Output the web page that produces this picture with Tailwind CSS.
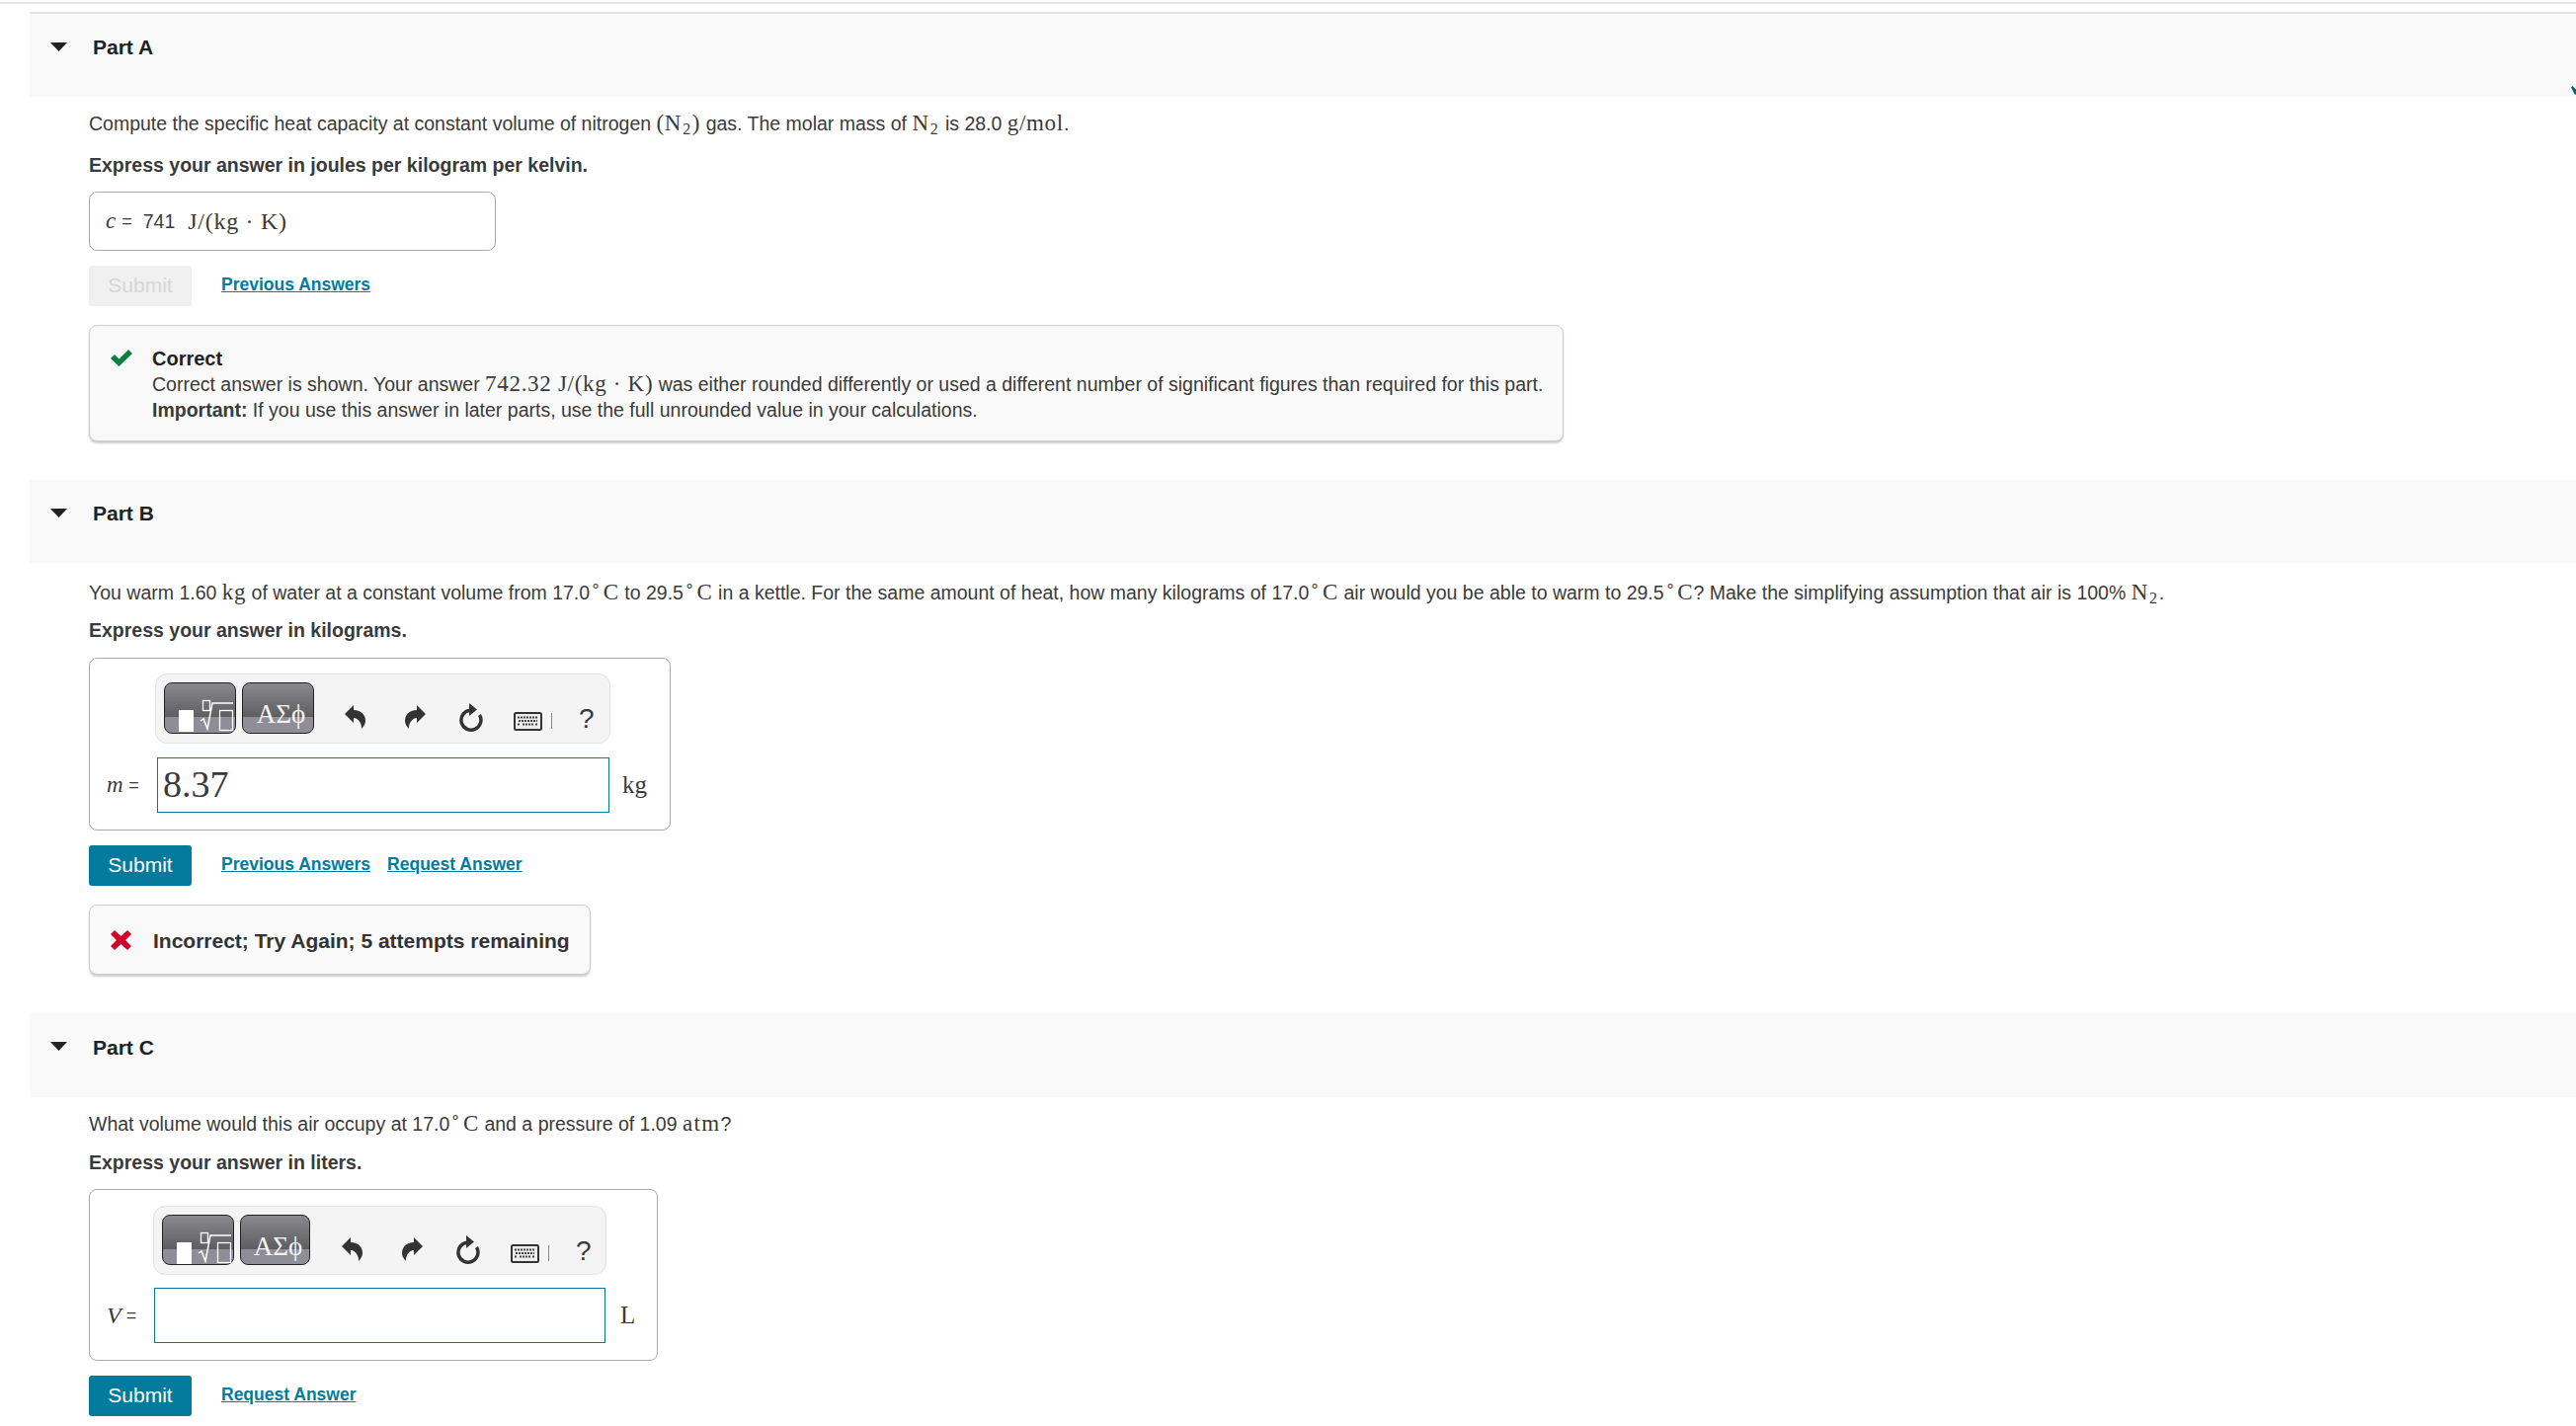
<!DOCTYPE html>
<html lang="en">
<head>
  <meta charset="UTF-8">
  <title>Part A, B, C</title>
  <script src="https://cdn.jsdelivr.net/npm/@tailwindcss/browser@4"></script>
</head>
<body class="bg-white text-[#3a3a3a] font-['Liberation_Sans',sans-serif] text-[19.5px] leading-[24px] overflow-hidden h-[1444px]">

  <div class="pt-[2px]"><div class="h-[2px] bg-[#e4e4e4]"></div></div>

  <!-- Part A -->
  <div class="ml-[30px] mt-[8px] h-[86px] bg-[#f9f9f9] border-t-2 border-[#e4e4e4] flex items-center gap-[26px] pl-[21px] pb-[16px] relative">
    <svg class="-mt-[2px]" width="17" height="9" viewBox="0 0 17 9"><path d="M0 0H17L8.5 9Z" fill="#222"/></svg>
    <span class="font-bold text-[#222] text-[21px]">Part A</span>
    <svg class="absolute right-0 top-[73px]" width="5" height="9" viewBox="0 0 5 9"><path d="M0 1.5L1.5 0L6 4.5V8L4 9Z" fill="#04607d"/></svg>
  </div>
  <div class="pl-[90px]">
    <p class="mt-[15px]">Compute the specific heat capacity at constant volume of nitrogen <span class="font-['Liberation_Serif'] text-[23px] tracking-[0.03em]">(N<sub class="text-[16px] leading-none ml-[1px] mr-[1px]">2</sub>)</span> gas. The molar mass of <span class="font-['Liberation_Serif'] text-[23px] tracking-[0.03em]">N<sub class="text-[16px] leading-none ml-[1px] mr-[1px]">2</sub></span> is 28.0 <span class="font-['Liberation_Serif'] text-[23px] tracking-[0.03em]">g/mol</span>.</p>
    <p class="mt-[18px] font-bold">Express your answer in joules per kilogram per kelvin.</p>
    <div class="mt-[15px] w-[412px] h-[60px] border border-[#aaa] rounded-lg flex items-center pl-[16px]">
      <i class="font-['Liberation_Serif'] text-[23px]">c</i><span class="ml-[6px] text-[18px]">=</span><span class="ml-[11px]">741</span>
      <span class="ml-[13px] font-['Liberation_Serif'] text-[24px] tracking-[0.03em]">J/(kg · K)</span>
    </div>
    <div class="mt-[15px] flex items-center">
      <button class="w-[104px] h-[41px] rounded-[3px] bg-[#f0f0f0] text-[#d6d6d6] text-[21px] pb-[2px]">Submit</button>
      <a href="#" class="ml-[30px] text-[17.5px] font-bold underline text-[#007c9e] pb-[3px]">Previous Answers</a>
    </div>
    <div class="mt-[19px] w-[1493px] h-[118px] bg-[#f9f9f9] border border-[#ccc] rounded-lg shadow-[0_2px_2px_rgba(0,0,0,0.2)] flex pl-[21px] pt-[20px]">
      <svg class="mt-[4px]" width="22" height="17" viewBox="0 0 22 17"><path d="M0 9L4 5L8.5 9.5L18 0L22 4L8.5 17Z" fill="#0a7f3f"/></svg>
      <div class="ml-[20px] leading-[26px]">
        <div class="font-bold text-[#222] text-[20px]">Correct</div>
        <div>Correct answer is shown. Your answer <span class="font-['Liberation_Serif'] text-[23px] tracking-[0.03em]">742.32 J/(kg · K)</span> was either rounded differently or used a different number of significant figures than required for this part.</div>
        <div><b>Important:</b> If you use this answer in later parts, use the full unrounded value in your calculations.</div>
      </div>
    </div>
  </div>

  <!-- Part B -->
  <div class="ml-[30px] mt-[39px] h-[84px] bg-[#f9f9f9] flex items-center gap-[26px] pl-[21px] pb-[16px]">
    <svg class="-mt-[2px]" width="17" height="9" viewBox="0 0 17 9"><path d="M0 0H17L8.5 9Z" fill="#222"/></svg>
    <span class="font-bold text-[#222] text-[21px]">Part B</span>
  </div>
  <div class="pl-[90px]">
    <p class="mt-[18px]">You warm 1.60 <span class="font-['Liberation_Serif'] text-[23px] tracking-[0.03em]">kg</span> of water at a constant volume from 17.0<span class="font-['Liberation_Serif'] text-[23px] tracking-[0.03em]"><sup class="text-[16px] leading-none ml-[1px] mr-[2px]">∘</sup>C</span> to 29.5<span class="font-['Liberation_Serif'] text-[23px] tracking-[0.03em]"><sup class="text-[16px] leading-none ml-[1px] mr-[2px]">∘</sup>C</span> in a kettle. For the same amount of heat, how many kilograms of 17.0<span class="font-['Liberation_Serif'] text-[23px] tracking-[0.03em]"><sup class="text-[16px] leading-none ml-[1px] mr-[2px]">∘</sup>C</span> air would you be able to warm to 29.5<span class="font-['Liberation_Serif'] text-[23px] tracking-[0.03em]"><sup class="text-[16px] leading-none ml-[1px] mr-[2px]">∘</sup>C</span>? Make the simplifying assumption that air is 100% <span class="font-['Liberation_Serif'] text-[23px] tracking-[0.03em]">N<sub class="text-[16px] leading-none ml-[1px] mr-[1px]">2</sub></span>.</p>
    <p class="mt-[14px] font-bold">Express your answer in kilograms.</p>
    <div class="mt-[16px] w-[589px] h-[175px] border border-[#aaa] rounded-lg pt-[15px] pl-[66px]">
      <div class="w-[461px] h-[71px] bg-[#f4f4f4] border border-[#e2e2e2] rounded-[12px] flex items-start pl-[8px] pt-[8px]">
        <button class="w-[73px] h-[52px] rounded-lg border border-[#222] bg-[linear-gradient(#8a898e_0%,#5e5e61_69%,#8f8e98_69%,#8f8e98_100%)]">
          <svg width="71" height="50" viewBox="0 0 71 50"><rect x="14" y="27" width="15" height="22" fill="#fff"/><rect x="38.500" y="17.500" width="7" height="10" fill="none" stroke="#fff" stroke-width="1.300"/><path d="M36 38L39 36L43 46L48 20H69" fill="none" stroke="#fff" stroke-width="1.500"/><rect x="55.500" y="27.500" width="13" height="20" fill="none" stroke="#fff" stroke-width="1.300"/></svg>
        </button>
        <button class="ml-[6px] w-[73px] h-[52px] rounded-lg border border-[#222] bg-[linear-gradient(#8a898e_0%,#5e5e61_69%,#8f8e98_69%,#8f8e98_100%)] text-[#f2f2f2] font-['Liberation_Serif'] text-[27px] leading-none pt-[13px] pl-[6px]">ΑΣϕ</button>
        <svg class="ml-[31px] mt-[23px]" width="21" height="24" viewBox="0 0 21 24"><path d="M0 9L9 0V5C17 5 21 10 21 16C21 19 19 22 17 24C17.500 19 14 13 9 13V18Z" fill="#333"/></svg>
        <svg class="ml-[40px] mt-[23px]" width="21" height="24" viewBox="0 0 21 24"><path d="M21 9L12 0V5C4 5 0 10 0 16C0 19 2 22 4 24C3.500 19 7 13 12 13V18Z" fill="#333"/></svg>
        <svg class="ml-[33px] mt-[21px]" width="25" height="29" viewBox="0 0 25 29"><path d="M12 7.200A10 10 0 1 0 21.500 12" fill="none" stroke="#333" stroke-width="3.500"/><path d="M11 0L19 6.500L11 13Z" fill="#333"/></svg>
        <svg class="ml-[31px] mt-[30px]" width="29" height="19" viewBox="0 0 29 19"><rect x="1" y="1" width="27" height="17" rx="1.500" fill="#eee" stroke="#333" stroke-width="2"/><path d="M4 5.500H25M5 9H24M4 12.500H7M9 12.500H20M22 12.500H25" stroke="#444" stroke-width="2" stroke-dasharray="2 1" fill="none"/></svg>
        <div class="ml-[9px] mt-[31px] w-px h-[16px] bg-[#888]"></div>
        <span class="ml-[27px] mt-[21px] text-[28px] leading-[32px]">?</span>
      </div>
      <div class="flex items-center mt-[14px] -ml-[49px]">
        <div class="w-[51px] flex items-center"><i class="font-['Liberation_Serif'] text-[23px] tracking-[0.03em]">m</i><span class="ml-[5px] text-[18px]">=</span></div>
        <div class="w-[458px] h-[56px] border border-[#047b9c] flex items-center pl-[5px] pb-[2px] font-['Liberation_Serif'] text-[38px]">8.37</div>
        <span class="ml-[13px] font-['Liberation_Serif'] text-[25px]">kg</span>
      </div>
    </div>
    <div class="mt-[15px] flex items-center">
      <button class="w-[104px] h-[41px] rounded-[3px] bg-[#047b9c] text-white text-[21px] pb-[2px]">Submit</button>
      <a href="#" class="ml-[30px] text-[17.5px] font-bold underline text-[#007c9e] pb-[3px]">Previous Answers</a>
      <a href="#" class="ml-[17px] text-[17.5px] font-bold underline text-[#007c9e] pb-[3px]">Request Answer</a>
    </div>
    <div class="mt-[19px] w-[508px] h-[71px] bg-[#f9f9f9] border border-[#ccc] rounded-lg shadow-[0_2px_2px_rgba(0,0,0,0.2)] flex items-center pl-[21px]">
      <svg width="21" height="20" viewBox="0 0 21 20"><path d="M0 4L4 0L10.500 6L17 0L21 4L15 10L21 16L17 20L10.500 14L4 20L0 16L6 10Z" fill="#d3002c"/></svg>
      <span class="ml-[22px] pt-[2px] font-bold text-[#333] text-[21px]">Incorrect; Try Again; 5 attempts remaining</span>
    </div>
  </div>

  <!-- Part C -->
  <div class="ml-[30px] mt-[39px] h-[85px] bg-[#f9f9f9] flex items-center gap-[26px] pl-[21px] pb-[16px]">
    <svg class="-mt-[2px]" width="17" height="9" viewBox="0 0 17 9"><path d="M0 0H17L8.5 9Z" fill="#222"/></svg>
    <span class="font-bold text-[#222] text-[21px]">Part C</span>
  </div>
  <div class="pl-[90px]">
    <p class="mt-[15px]">What volume would this air occupy at 17.0<span class="font-['Liberation_Serif'] text-[23px] tracking-[0.03em]"><sup class="text-[16px] leading-none ml-[1px] mr-[2px]">∘</sup>C</span> and a pressure of 1.09 <span class="font-['Liberation_Serif'] text-[23px] tracking-[0.06em]">atm</span>?</p>
    <p class="mt-[15px] font-bold">Express your answer in liters.</p>
    <div class="mt-[15px] w-[576px] h-[174px] border border-[#aaa] rounded-lg pt-[16px] pl-[64px]">
      <div class="w-[459px] h-[70px] bg-[#f4f4f4] border border-[#e2e2e2] rounded-[12px] flex items-start pl-[8px] pt-[8px]">
        <button class="w-[73px] h-[51px] rounded-lg border border-[#222] bg-[linear-gradient(#8a898e_0%,#5e5e61_69%,#8f8e98_69%,#8f8e98_100%)]">
          <svg width="71" height="49" viewBox="0 0 71 49"><rect x="14" y="27" width="15" height="22" fill="#fff"/><rect x="38.500" y="17.500" width="7" height="10" fill="none" stroke="#fff" stroke-width="1.300"/><path d="M36 38L39 36L43 46L48 20H69" fill="none" stroke="#fff" stroke-width="1.500"/><rect x="55.500" y="27.500" width="13" height="20" fill="none" stroke="#fff" stroke-width="1.300"/></svg>
        </button>
        <button class="ml-[6px] w-[71px] h-[51px] rounded-lg border border-[#222] bg-[linear-gradient(#8a898e_0%,#5e5e61_69%,#8f8e98_69%,#8f8e98_100%)] text-[#f2f2f2] font-['Liberation_Serif'] text-[27px] leading-none pt-[13px] pl-[6px]">ΑΣϕ</button>
        <svg class="ml-[32px] mt-[23px]" width="21" height="24" viewBox="0 0 21 24"><path d="M0 9L9 0V5C17 5 21 10 21 16C21 19 19 22 17 24C17.500 19 14 13 9 13V18Z" fill="#333"/></svg>
        <svg class="ml-[40px] mt-[23px]" width="21" height="24" viewBox="0 0 21 24"><path d="M21 9L12 0V5C4 5 0 10 0 16C0 19 2 22 4 24C3.500 19 7 13 12 13V18Z" fill="#333"/></svg>
        <svg class="ml-[33px] mt-[21px]" width="25" height="29" viewBox="0 0 25 29"><path d="M12 7.200A10 10 0 1 0 21.500 12" fill="none" stroke="#333" stroke-width="3.500"/><path d="M11 0L19 6.500L11 13Z" fill="#333"/></svg>
        <svg class="ml-[31px] mt-[30px]" width="29" height="19" viewBox="0 0 29 19"><rect x="1" y="1" width="27" height="17" rx="1.500" fill="#eee" stroke="#333" stroke-width="2"/><path d="M4 5.500H25M5 9H24M4 12.500H7M9 12.500H20M22 12.500H25" stroke="#444" stroke-width="2" stroke-dasharray="2 1" fill="none"/></svg>
        <div class="ml-[9px] mt-[31px] w-px h-[16px] bg-[#888]"></div>
        <span class="ml-[27px] mt-[21px] text-[28px] leading-[32px]">?</span>
      </div>
      <div class="flex items-center mt-[13px] -ml-[47px]">
        <div class="w-[48px] flex items-center"><i class="font-['Liberation_Serif'] text-[24px]">V</i><span class="ml-[5px] text-[18px]">=</span></div>
        <div class="w-[457px] h-[56px] border border-[#047b9c]"></div>
        <span class="ml-[15px] font-['Liberation_Serif'] text-[25px]">L</span>
      </div>
    </div>
    <div class="mt-[15px] flex items-center">
      <button class="w-[104px] h-[41px] rounded-[3px] bg-[#047b9c] text-white text-[21px] pb-[2px]">Submit</button>
      <a href="#" class="ml-[30px] text-[17.5px] font-bold underline text-[#007c9e] pb-[3px]">Request Answer</a>
    </div>
  </div>

</body>
</html>
